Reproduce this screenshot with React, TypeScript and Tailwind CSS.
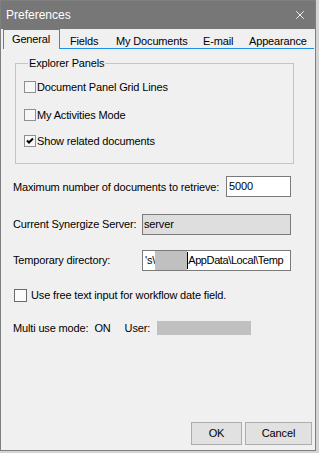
import { X } from "lucide-react";

function OldCheck({ checked, label }: { checked?: boolean; label: string }) {
    return (
        <div className="flex items-center h-[14px]">
            <span className="w-[12px] h-[12px] border border-[#8f8f8f] bg-[#f7f7f7] flex items-center justify-center">
                {checked && (
                    <svg width="8" height="8" viewBox="0 0 8 8">
                        <path d="M1 3.5 L3 5.5 L7 1.5" stroke="#000" strokeWidth="2" fill="none" />
                    </svg>
                )}
            </span>
            <span className="ml-[1px]">{label}</span>
        </div>
    );
}

export default function App() {
    return (
        <div className="w-[319px] h-[453px] bg-[#d4d4d4] text-[11px] tracking-[-0.15px] text-black" style={{ fontFamily: '"Liberation Sans", Arial, sans-serif' }}>
            <div className="w-[316px] h-[451px] border border-[#7f7f7f] bg-[#f0f0f0] flex flex-col">
                {/* title bar */}
                <div className="h-[28px] bg-[#777777] flex items-center justify-between pl-[5px] pr-[8px] shrink-0">
                    <span className="text-white text-[12px] tracking-normal">Preferences</span>
                    <X size={14} color="#fff" strokeWidth={1.5} />
                </div>

                {/* tabs */}
                <div className="h-[20px] flex shrink-0">
                    <div className="ml-[2px] w-[57px] h-[20px] border-t border-l border-r border-[#1e90e8] pl-[8px] pt-[3px] leading-[13px]">
                        General
                    </div>
                    <div className="flex-1 mr-[1px] border-b border-[#1e90e8] flex items-end leading-[13px]">
                        <span className="w-[48px] pl-[10px]">Fields</span>
                        <span className="w-[87px] pl-[8px]">My Documents</span>
                        <span className="w-[46px] pl-[8px]">E-mail</span>
                        <span className="pl-[8px]">Appearance</span>
                    </div>
                </div>

                {/* body */}
                <div className="flex-1 flex flex-col">
                    <fieldset className="ml-[14px] mt-[8px] w-[279px] border border-[#c4c4c4] pl-[8px] pb-[15px]">
                        <legend className="ml-[4px] px-[1px] leading-[13px]">Explorer Panels</legend>
                        <div className="pt-[10px] flex flex-col">
                            <OldCheck label="Document Panel Grid Lines" />
                            <div className="mt-[14px]">
                                <OldCheck label="My Activities Mode" />
                            </div>
                            <div className="mt-[12px]">
                                <OldCheck checked label="Show related documents" />
                            </div>
                        </div>
                    </fieldset>

                    <div className="pl-[12px] pr-[24px] flex flex-col">
                        <div className="mt-[12px] h-[21px] flex items-center">
                            <span className="pt-[2px]">Maximum number of documents to retrieve:</span>
                            <div className="ml-auto w-[65px] h-[21px] border border-[#7a7a7a] bg-white pl-[2px] flex items-center">5000</div>
                        </div>
                        <div className="mt-[17px] h-[21px] flex items-center">
                            <span>Current Synergize Server:</span>
                            <div className="ml-auto w-[149px] h-[21px] border border-[#7a7a7a] bg-[#dedede] pl-[1px] flex items-center">server</div>
                        </div>
                        <div className="mt-[15px] h-[21px] flex items-center">
                            <span>Temporary directory:</span>
                            <div className="ml-auto w-[149px] h-[21px] border border-[#7a7a7a] bg-white flex items-center overflow-hidden whitespace-nowrap pl-[2px]">
                                <span>'s\</span>
                                <span className="w-[32px] h-[19px] bg-[#c0c0c0]" />
                                <span className="w-[1px] h-[17px] bg-black" />
                                <span className="tracking-[-0.4px]">AppData\Local\Temp</span>
                            </div>
                        </div>

                        <div className="mt-[18px] h-[13px] flex items-center">
                            <span className="ml-[1px] w-[13px] h-[13px] border border-[#6a6a6a] bg-[#fbfbfb]" />
                            <span className="ml-[4px]">Use free text input for workflow date field.</span>
                        </div>

                        <div className="mt-[19px] h-[14px] flex items-center">
                            <span>Multi use mode:</span>
                            <span className="ml-[6px]">ON</span>
                            <span className="ml-[14px]">User:</span>
                            <span className="ml-[7px] w-[94px] h-[14px] bg-[#c0c0c0]" />
                        </div>
                    </div>

                    <div className="mt-auto mb-[5px] pr-[3px] flex justify-end gap-[3px]">
                        <button className="w-[51px] h-[23px] border border-[#adadad] bg-[#e1e1e1]">OK</button>
                        <button className="w-[67px] h-[23px] border border-[#adadad] bg-[#e1e1e1]">Cancel</button>
                    </div>
                </div>
            </div>
        </div>
    );
}
